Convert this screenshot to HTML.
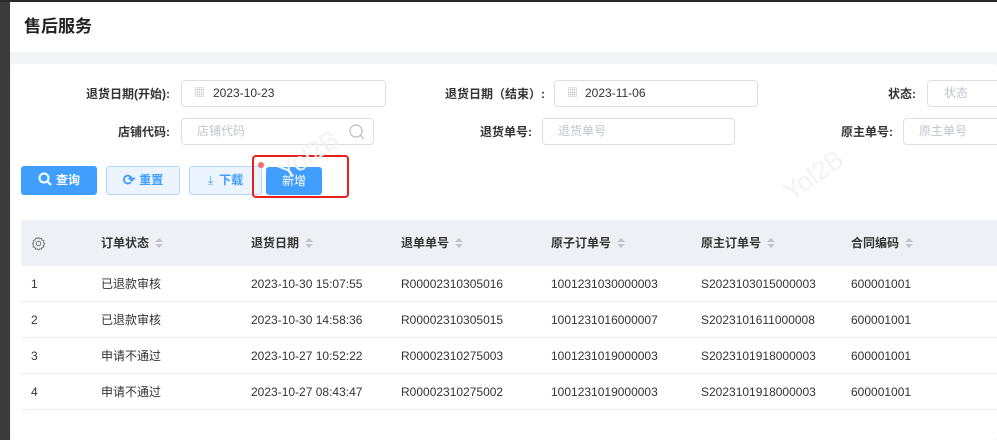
<!DOCTYPE html>
<html><head><meta charset="utf-8"><style>
*{box-sizing:border-box;margin:0;padding:0}
body{width:997px;height:440px;overflow:hidden;background:#f3f4f6;font-family:"Liberation Sans","Noto Sans CJK SC",sans-serif;position:relative;color:#333}
.strip{position:absolute;left:0;top:0;width:10px;height:440px;background:#3b3b3b}
.topline{position:absolute;left:0;top:0;width:997px;height:2px;background:#2a2a2a}
.hdr{position:absolute;left:10px;top:2px;right:0;height:50px;background:#fff}
.hdr h1{position:absolute;left:14px;top:14px;font-size:17px;line-height:22px;font-weight:bold;color:#222}
.card{position:absolute;left:11px;top:64px;right:0;bottom:0;background:#fff;border-radius:3px}
.lbl{position:absolute;font-size:12px;line-height:16px;font-weight:bold;color:#333;text-align:right}
.inp{position:absolute;height:27px;border:1px solid #dcdfe6;border-radius:4px;background:#fff;font-size:12px;line-height:25px;color:#333}
.ph{color:#c0c4cc}
.btn{position:absolute;top:166px;height:29px;border-radius:3px;font-size:12px;font-weight:bold;line-height:29px;text-align:center}
.th{position:absolute;left:21px;right:0;top:220px;height:46px;background:#eef0f5}
.c{position:absolute;font-size:12px;line-height:16px;height:16px;white-space:nowrap}
.row{position:absolute;left:21px;right:0;height:36px;border-bottom:1px solid #ebeef5}
.sort{display:inline-block;width:8px;height:10px;vertical-align:-1px;margin-left:6px;position:relative}
.sort:before{content:"";position:absolute;left:0;top:0;border:4px solid transparent;border-bottom-color:#c0c4cc;border-top:0}
.sort:after{content:"";position:absolute;left:0;top:6px;border:4px solid transparent;border-top-color:#c0c4cc;border-bottom:0}
</style></head><body>
<div class="strip"></div><div class="topline"></div>
<div class="hdr"><h1>售后服务</h1></div>
<div class="card"></div>

<div class="lbl" style="left:60px;top:86px;width:110px">退货日期(开始):</div>
<div class="inp" style="left:181px;top:80px;width:205px"><span style="position:absolute;left:12px;top:0;color:#bbb;font-size:11px">▦</span><span style="position:absolute;left:31px">2023-10-23</span></div>
<div class="lbl" style="left:400px;top:86px;width:145px">退货日期（结束）:</div>
<div class="inp" style="left:554px;top:80px;width:204px"><span style="position:absolute;left:12px;top:0;color:#bbb;font-size:11px">▦</span><span style="position:absolute;left:30px">2023-11-06</span></div>
<div class="lbl" style="left:850px;top:86px;width:66px">状态:</div>
<div class="inp" style="left:927px;top:80px;width:90px"><span class="ph" style="position:absolute;left:16px">状态</span></div>

<div class="lbl" style="left:60px;top:124px;width:110px">店铺代码:</div>
<div class="inp" style="left:181px;top:118px;width:193px"><span class="ph" style="position:absolute;left:15px">店铺代码</span>
<svg style="position:absolute;right:8px;top:5px" width="16" height="16"><circle cx="7" cy="7" r="6" fill="none" stroke="#bbb" stroke-width="1.2"/><line x1="11.5" y1="11.5" x2="15" y2="15" stroke="#bbb" stroke-width="1.2"/></svg></div>
<div class="lbl" style="left:420px;top:124px;width:112px">退货单号:</div>
<div class="inp" style="left:542px;top:118px;width:193px"><span class="ph" style="position:absolute;left:15px">退货单号</span></div>
<div class="lbl" style="left:800px;top:124px;width:93px">原主单号:</div>
<div class="inp" style="left:903px;top:118px;width:120px"><span class="ph" style="position:absolute;left:15px">原主单号</span></div>

<div class="btn" style="left:21px;width:76px;background:#409eff;color:#fff"><svg width="14" height="14" style="vertical-align:-2px;margin-right:4px"><circle cx="6" cy="6" r="4.5" fill="none" stroke="#fff" stroke-width="2"/><line x1="9.5" y1="9.5" x2="13" y2="13" stroke="#fff" stroke-width="2.2"/></svg>查询</div>
<div class="btn" style="left:106px;width:74px;background:#ecf5ff;border:1px solid #b3d8ff;color:#409eff;line-height:27px"><span style="font-size:15px;vertical-align:-1px;margin-right:4px">⟳</span>重置</div>
<div class="btn" style="left:189px;width:73px;background:#ecf5ff;border:1px solid #b3d8ff;color:#409eff;line-height:27px"><span style="font-weight:normal;margin-right:6px">⤓</span>下载</div>
<div style="position:absolute;left:261px;top:166px;width:1px;height:28px;background:#b3d8ff"></div>
<div class="btn" style="left:266px;top:167px;width:56px;height:28px;line-height:28px;background:#409eff;color:#fff;font-weight:normal">新增</div>
<div style="position:absolute;left:252px;top:155px;width:97px;height:43px;border:2px solid #e8201a;border-radius:4px"></div>
<div style="position:absolute;left:258px;top:162px;width:6px;height:6px;border-radius:50%;background:#f56c6c"></div>
<div style="position:absolute;left:275px;top:140px;font-size:26px;color:#f3f3f3;transform:rotate(-35deg)">Yol2B</div>
<div style="position:absolute;left:780px;top:160px;font-size:26px;color:#f3f3f3;transform:rotate(-35deg)">Yol2B</div>

<div class="th"></div>
<svg style="position:absolute;left:31px;top:236px" width="15" height="15" viewBox="0 0 15 15"><circle cx="7.5" cy="7.5" r="2.3" fill="none" stroke="#777" stroke-width="1"/><path d="M7.5 1.5l1.3 1.3 1.8-.4.5 1.8 1.8.5-.4 1.8 1.3 1.3-1.3 1.3.4 1.8-1.8.5-.5 1.8-1.8-.4-1.3 1.3-1.3-1.3-1.8.4-.5-1.8-1.8-.5.4-1.8L1.5 7.5l1.3-1.3-.4-1.8 1.8-.5.5-1.8 1.8.4z" fill="none" stroke="#777" stroke-width="1"/></svg>
<div class="c" style="left:101px;top:235px;font-weight:bold">订单状态<span class="sort"></span></div>
<div class="c" style="left:251px;top:235px;font-weight:bold">退货日期<span class="sort"></span></div>
<div class="c" style="left:401px;top:235px;font-weight:bold">退单单号<span class="sort"></span></div>
<div class="c" style="left:551px;top:235px;font-weight:bold">原子订单号<span class="sort"></span></div>
<div class="c" style="left:701px;top:235px;font-weight:bold">原主订单号<span class="sort"></span></div>
<div class="c" style="left:851px;top:235px;font-weight:bold">合同编码<span class="sort"></span></div>

<div class="row" style="top:266px"></div><div class="row" style="top:302px"></div><div class="row" style="top:338px"></div><div class="row" style="top:374px"></div>

<div class="c" style="left:31px;top:276px">1</div><div class="c" style="left:101px;top:276px">已退款审核</div><div class="c" style="left:251px;top:276px">2023-10-30 15:07:55</div><div class="c" style="left:401px;top:276px">R00002310305016</div><div class="c" style="left:551px;top:276px">1001231030000003</div><div class="c" style="left:701px;top:276px">S2023103015000003</div><div class="c" style="left:851px;top:276px">600001001</div>
<div class="c" style="left:31px;top:312px">2</div><div class="c" style="left:101px;top:312px">已退款审核</div><div class="c" style="left:251px;top:312px">2023-10-30 14:58:36</div><div class="c" style="left:401px;top:312px">R00002310305015</div><div class="c" style="left:551px;top:312px">1001231016000007</div><div class="c" style="left:701px;top:312px">S2023101611000008</div><div class="c" style="left:851px;top:312px">600001001</div>
<div class="c" style="left:31px;top:348px">3</div><div class="c" style="left:101px;top:348px">申请不通过</div><div class="c" style="left:251px;top:348px">2023-10-27 10:52:22</div><div class="c" style="left:401px;top:348px">R00002310275003</div><div class="c" style="left:551px;top:348px">1001231019000003</div><div class="c" style="left:701px;top:348px">S2023101918000003</div><div class="c" style="left:851px;top:348px">600001001</div>
<div class="c" style="left:31px;top:384px">4</div><div class="c" style="left:101px;top:384px">申请不通过</div><div class="c" style="left:251px;top:384px">2023-10-27 08:43:47</div><div class="c" style="left:401px;top:384px">R00002310275002</div><div class="c" style="left:551px;top:384px">1001231019000003</div><div class="c" style="left:701px;top:384px">S2023101918000003</div><div class="c" style="left:851px;top:384px">600001001</div>
</body></html>
